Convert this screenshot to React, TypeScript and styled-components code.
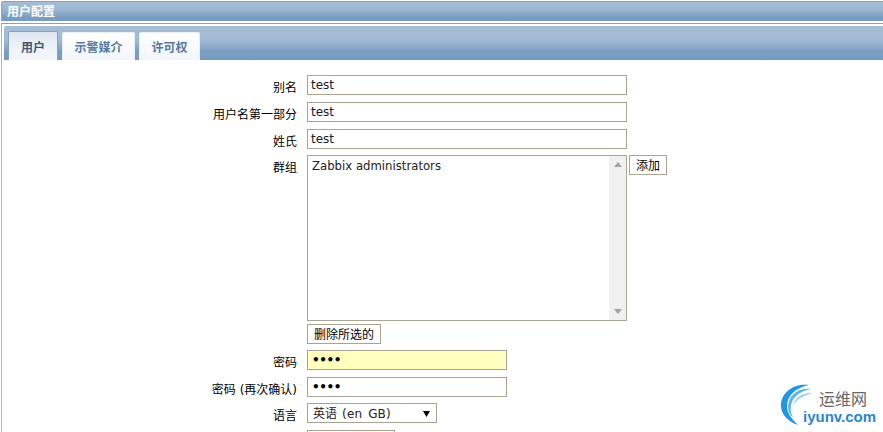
import React from 'react';
import styled, { createGlobalStyle } from 'styled-components';

const GlobalStyle = createGlobalStyle`
  html, body {
    margin: 0;
    padding: 0;
    background: #fff;
    overflow: hidden;
  }
  body {
    font-family: "DejaVu Sans", "Noto Sans CJK SC", sans-serif;
    font-size: 12px;
    color: #000;
  }
`;

const barGradient = `linear-gradient(to bottom, #a5bed6 0%, #a2bbd4 40%, #7a9ec1 75%, #749bbf 100%)`;

const Page = styled.div`
  position: relative;
  width: 883px;
  height: 432px;
  overflow: hidden;
  padding: 1px 0 0 1px;
  box-sizing: border-box;
`;

const TitleBar = styled.div`
  height: 20px;
  box-sizing: border-box;
  border-top: 1px solid #8aa0bb;
  border-left: 1px solid #8aa0bb;
  background: linear-gradient(to bottom, #a5bed6 0%, #9ab6d1 40%, #7a9ec1 80%, #749bbf 100%);
  color: #fff;
  font-family: "Noto Sans CJK SC", sans-serif;
  font-size: 12px;
  font-weight: 700;
  line-height: 18px;
  padding-left: 5px;
  border-radius: 2px 0 0 0;
`;

const Panel = styled.div`
  margin-top: 2px;
  border-top: 1px solid #8aa0bb;
  border-left: 1px solid #a9b6c6;
  padding: 2px 0 0 2px;
`;

const TabBar = styled.div`
  display: flex;
  align-items: flex-end;
  gap: 4px;
  height: 34px;
  box-sizing: border-box;
  padding-left: 4px;
  background: ${barGradient};
  border-radius: 2px 0 0 0;
`;

const Tab = styled.div<{ $active?: boolean; $width: number }>`
  width: ${p => p.$width}px;
  height: ${p => (p.$active ? 29 : 28)}px;
  box-sizing: border-box;
  display: flex;
  align-items: center;
  justify-content: center;
  border: 1px solid ${p => (p.$active ? '#84a3c4' : '#e8eef5')};
  border-bottom: none;
  border-radius: 2px 2px 0 0;
  background: ${p =>
    p.$active
      ? 'linear-gradient(to bottom, #dde6f0, #f0f4f9 60%, #f2f5fa)'
      : 'linear-gradient(to bottom, #ffffff, #f2f5fa)'};
  color: ${p => (p.$active ? '#3d5878' : '#587a9f')};
  font-family: "Noto Sans CJK SC", sans-serif;
  font-size: 12px;
  font-weight: 700;
`;

const Form = styled.div`
  padding-top: 15px;
  display: flex;
  flex-direction: column;
`;

const Row = styled.div<{ $gap?: number }>`
  display: grid;
  grid-template-columns: 293px auto;
  column-gap: 10px;
  margin-bottom: ${p => p.$gap ?? 7}px;
`;

const Label = styled.div`
  text-align: right;
  font-family: "DejaVu Sans", "Noto Sans CJK SC", sans-serif;
  font-size: 12px;
  height: 20px;
  line-height: 26px;
  white-space: pre;
`;

const Field = styled.div<{ $width: number; $fill?: string }>`
  width: ${p => p.$width}px;
  height: 20px;
  box-sizing: border-box;
  border: 1px solid #aaa593;
  background: ${p => p.$fill ?? '#fff'};
  padding-left: 3px;
  font-size: 12px;
  line-height: 18px;
  color: #1a1a2a;
`;

const Dots = styled.span`
  font-family: "DejaVu Sans", sans-serif;
  font-size: 12px;
  font-weight: 700;
  letter-spacing: -0.4px;
  line-height: 18px;
  color: #000;
  margin-left: 1px;
`;

const GroupWrap = styled.div`
  display: flex;
  align-items: flex-start;
  gap: 2px;
`;

const ListBox = styled.div`
  width: 320px;
  height: 166px;
  box-sizing: border-box;
  border: 1px solid #aaa593;
  display: flex;
  justify-content: space-between;
`;

const ListItem = styled.div`
  padding: 2px 0 0 4px;
  font-size: 11.7px;
  line-height: 16px;
  color: #222;
`;

const ScrollTrack = styled.div`
  width: 17px;
  background: #f0f0f0;
  display: flex;
  flex-direction: column;
  justify-content: space-between;
  align-items: center;
  padding: 6px 0;
  box-sizing: border-box;
`;

const Arrow = styled.svg`
  width: 8px;
  height: 5px;
  fill: #a3a3a3;
  display: block;
`;

const Button = styled.div`
  display: inline-flex;
  align-items: center;
  justify-content: center;
  height: 20px;
  box-sizing: border-box;
  border: 1px solid #aaa593;
  background: #fff;
  padding: 0 6px;
  font-family: "Noto Sans CJK SC", sans-serif;
  font-size: 12px;
  line-height: 18px;
  color: #000;
`;

const DropDown = styled(Field)`
  display: flex;
  align-items: center;
  justify-content: space-between;
  padding: 0 6px 0 5px;
  line-height: 18px;
  color: #222;
`;

const DropText = styled.span`
  display: block;
  height: 13px;
  line-height: 15px;
  margin-top: 1px;
  overflow: hidden;
  word-spacing: 1px;
  letter-spacing: 0.1px;
`;

const ArrowDark = styled.svg`
  width: 7px;
  height: 7px;
  fill: #000;
  display: block;
`;

const NextField = styled.div`
  width: 88px;
  height: 20px;
  box-sizing: border-box;
  border: 1px solid #aaa593;
`;

const Watermark = styled.div`
  position: absolute;
  left: 780px;
  top: 383px;
  width: 103px;
  height: 46px;
`;

const MarkArc = styled.svg`
  position: absolute;
  left: 0;
  top: 0;
  width: 40px;
  height: 46px;
`;

const MarkCn = styled.div`
  position: absolute;
  left: 39px;
  top: 5px;
  font-family: "Noto Sans CJK SC", sans-serif;
  font-size: 16px;
  line-height: 20px;
  color: #666;
`;

const MarkEn = styled.div`
  position: absolute;
  left: 23px;
  top: 24px;
  font-family: "Liberation Sans", sans-serif;
  font-size: 15px;
  font-weight: 700;
  line-height: 20px;
  color: #2e86c9;
`;

export default function App() {
  return (
    <Page>
      <GlobalStyle />
      <TitleBar>用户配置</TitleBar>
      <Panel>
        <TabBar>
          <Tab $active $width={50}>用户</Tab>
          <Tab $width={73}>示警媒介</Tab>
          <Tab $width={61}>许可权</Tab>
        </TabBar>
        <Form>
          <Row>
            <Label>别名</Label>
            <Field $width={320}>test</Field>
          </Row>
          <Row>
            <Label>用户名第一部分</Label>
            <Field $width={320}>test</Field>
          </Row>
          <Row $gap={6}>
            <Label>姓氏</Label>
            <Field $width={320}>test</Field>
          </Row>
          <Row $gap={3}>
            <Label>群组</Label>
            <GroupWrap>
              <ListBox>
                <ListItem>Zabbix administrators</ListItem>
                <ScrollTrack>
                  <Arrow viewBox="0 0 8 5"><path d="M4 0 8 5H0z" /></Arrow>
                  <Arrow viewBox="0 0 8 5"><path d="M0 0h8L4 5z" /></Arrow>
                </ScrollTrack>
              </ListBox>
              <Button>添加</Button>
            </GroupWrap>
          </Row>
          <Row $gap={6}>
            <Label />
            <div><Button>删除所选的</Button></div>
          </Row>
          <Row>
            <Label>密码</Label>
            <Field $width={200} $fill="#ffffbe"><Dots>••••</Dots></Field>
          </Row>
          <Row $gap={6}>
            <Label>密码 (再次确认)</Label>
            <Field $width={200}><Dots>••••</Dots></Field>
          </Row>
          <Row>
            <Label>语言</Label>
            <DropDown $width={130}>
              <DropText>英语 (en_GB)</DropText>
              <ArrowDark viewBox="0 0 7 7"><path d="M0 1h7L3.5 7z" /></ArrowDark>
            </DropDown>
          </Row>
          <Row>
            <Label />
            <NextField />
          </Row>
        </Form>
      </Panel>
      <Watermark>
        <MarkArc viewBox="0 0 40 46">
          <path d="M29 2C12 0 0 11 1 24 2 33 9 39 18 42 11 35 7 30 7 23 7 13 15 5 29 2z" fill="#2296e0" />
          <path d="M31 6C19 4 8 12 8 24 8 28 10 32 13 35 11 30 10 27 11 23 12 14 20 8 31 6z" fill="#5fb6ec" />
          <path d="M33 10C24 9 15 14 13 23 17 16 24 12 33 10z" fill="#9ad3f3" />
        </MarkArc>
        <MarkCn>运维网</MarkCn>
        <MarkEn>iyunv.com</MarkEn>
      </Watermark>
    </Page>
  );
}
